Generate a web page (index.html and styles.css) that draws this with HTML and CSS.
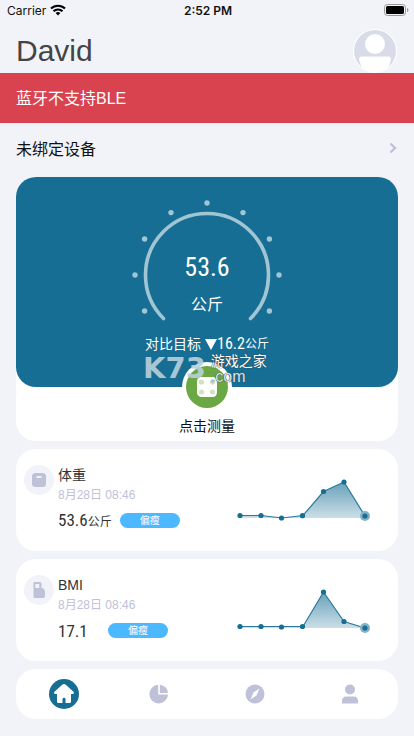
FILE: index.html
```html
<!DOCTYPE html>
<html lang="zh-CN">
<head>
<meta charset="utf-8">
<meta name="viewport" content="width=device-width, initial-scale=1">
<title>David</title>
<link rel="stylesheet" href="styles.css">
</head>
<body>
<div class="status">
  <div class="carrier">Carrier
    <svg width="16" height="12" viewBox="0 0 16 12" fill="none" stroke="#000" stroke-width="2.1"><path d="M1 4.6a10 10 0 0 1 14 0M3.5 7.3a6.4 6.4 0 0 1 9 0"/><path d="M8 11.5 5.6 9.1a3.4 3.4 0 0 1 4.8 0z" fill="#000" stroke="none"/></svg>
  </div>
  <div class="clock">2:52 PM</div>
  <svg class="battery" width="25" height="12" viewBox="0 0 25 12"><rect x=".5" y=".5" width="21" height="11" rx="3" fill="none" stroke="#999"/><rect x="2" y="2" width="18" height="8" rx="1.6"/><path d="M23 4v4q1.500-.6 1.500-2t-1.500-2" fill="#999"/></svg>
</div>
<header class="header">
  <h1>David</h1>
  <button class="avatar" aria-label="个人资料">
    <svg width="44" height="44" viewBox="0 0 44 44"><defs><clipPath id="face"><circle cx="22" cy="22" r="21.500"/></clipPath></defs><circle cx="22" cy="22" r="22" fill="#fff"/><circle cx="22" cy="22" r="21" fill="#d9dbe8"/><g fill="#fff" clip-path="url(#face)"><circle cx="22" cy="15" r="10"/><path d="M9 27.500h26q3 0 3 3l-1.500 5L33 44H11L7.500 35.500 6 30.500q0-3 3-3"/></g></svg>
  </button>
</header>
<div class="alert" role="alert">蓝牙不支持BLE</div>
<main>
  <a class="device" href="#device">未绑定设备
    <svg width="10" height="12" viewBox="0 0 10 12" fill="none" stroke="#bfc1d8" stroke-width="2.400"><path d="m2.500 1.500 4.500 4.500-4.500 4.500"/></svg>
  </a>
  <section class="measure">
    <div class="panel">
      <div class="gauge">
        <svg width="150" height="130" viewBox="0 0 150 130"><path d="M31.500 121.500a61.500 61.500 0 1 1 87 0" fill="none" stroke="#a2c5d4" stroke-width="3.600" stroke-linecap="round"/><g fill="#a2c5d4"><circle cx="75" cy="6" r="2.700"/><circle cx="39" cy="15.600" r="2.700"/><circle cx="111" cy="15.600" r="2.700"/><circle cx="12.600" cy="42" r="2.700"/><circle cx="137.400" cy="42" r="2.700"/><circle cx="3" cy="78" r="2.700"/><circle cx="147" cy="78" r="2.700"/><circle cx="12.600" cy="114" r="2.700"/><circle cx="137.400" cy="114" r="2.700"/></g></svg>
        <div class="reading"><strong class="num">53.6</strong><span>公斤</span></div>
      </div>
      <p class="goal">对比目标 <svg width="12" height="11" viewBox="0 0 12 11"><path d="M0 0h12L6 11z" fill="#fff"/></svg><strong class="num">16.2</strong><small>公斤</small></p>
    </div>
    <button class="start">
      <svg width="50" height="50" viewBox="0 0 50 50"><circle cx="25" cy="25" r="25" fill="#fff"/><circle cx="25" cy="25" r="21" fill="#6ba844"/><rect x="15" y="15" width="20" height="20" rx="4.500" fill="#fff"/><g fill="#cfe3c3"><circle cx="19.500" cy="20" r="2.600"/><circle cx="30.500" cy="20" r="2.600"/><circle cx="19.500" cy="30" r="2.600"/><circle cx="30.500" cy="30" r="2.600"/></g></svg>
      <span>点击测量</span>
    </button>
    <div class="watermark"><b>K73</b><div><span>游戏之家</span><i>.com</i></div></div>
  </section>
  <section class="card">
    <div class="badge"><svg width="14" height="14" viewBox="0 0 14 14"><rect width="14" height="14" rx="3.500" fill="#bfc1d8"/><path d="M4.500 4h5" stroke="#f1f2f7" stroke-width="2"/></svg></div>
    <div class="info">
      <h2>体重</h2>
      <time>8月28日 08:46</time>
      <div class="value"><p><strong class="num">53.6</strong><small>公斤</small></p><span class="tag">偏瘦</span></div>
    </div>
    <svg class="chart" width="136" height="50" viewBox="0 0 136 50">
      <defs><linearGradient id="fade" x1="0" y1="8" x2="0" y2="46" gradientUnits="userSpaceOnUse"><stop stop-color="#166e94" stop-opacity=".65"/><stop offset="1" stop-color="#166e94" stop-opacity=".2"/></linearGradient></defs>
      <path d="M5 41.500h21L47 44l21-2.500L88.500 17.500 109 8l21 34v2H5z" fill="url(#fade)"/>
      <path d="M5 41.500h21L47 44l21-2.500L88.500 17.500 109 8l21 34" fill="none" stroke="#29799c" stroke-width="1.200"/>
      <circle cx="130" cy="42" r="5" fill="#82b1c5"/>
      <g fill="#166e94"><circle cx="5" cy="41.500" r="2.600"/><circle cx="26" cy="41.500" r="2.600"/><circle cx="46.500" cy="44" r="2.600"/><circle cx="67.500" cy="41.700" r="2.600"/><circle cx="88.500" cy="17.500" r="2.600"/><circle cx="109" cy="8" r="2.600"/><circle cx="130" cy="42" r="2.600"/></g>
    </svg>
  </section>
  <section class="card">
    <div class="badge"><svg width="12" height="16" viewBox="0 0 12 16"><path fill-rule="evenodd" d="M1.500 0H7q1.500 0 1.500 1.500V6h1Q12 7 12 9.500V14q0 2-2 2H1.500Q.5 16 .5 15V1q0-1 1-1m.8 2v4h4V2z" fill="#bfc1d8"/></svg></div>
    <div class="info">
      <h2>BMI</h2>
      <time>8月28日 08:46</time>
      <div class="value"><p><strong class="num">17.1</strong></p><span class="tag">偏瘦</span></div>
    </div>
    <svg class="chart" width="136" height="50" viewBox="0 0 136 50">
      <path d="M5 42.500h63L88.500 8 109 37.500l21 6.500H5z" fill="url(#fade)"/>
      <path d="M5 42.500h63L88.500 8 109 37.500l21 6.500" fill="none" stroke="#29799c" stroke-width="1.200"/>
      <circle cx="130" cy="44" r="5" fill="#82b1c5"/>
      <g fill="#166e94"><circle cx="5" cy="42.500" r="2.600"/><circle cx="26" cy="42.500" r="2.600"/><circle cx="46.500" cy="43" r="2.600"/><circle cx="67.500" cy="42.500" r="2.600"/><circle cx="88.500" cy="8" r="2.600"/><circle cx="109" cy="37.500" r="2.600"/><circle cx="130" cy="44" r="2.600"/></g>
    </svg>
  </section>
  <nav class="tabs">
    <a href="#home" aria-label="首页"><svg width="30" height="30" viewBox="0 0 30 30"><circle cx="15" cy="15" r="15" fill="#166e94"/><path d="M13.500 5.500q1.500-1.200 3 0l8.300 7.500q.8 1.500-.8 2h-2v7.500q0 1.500-1.500 1.500h-4v-4q0-1.300-1.500-1.300T13.500 20v4h-4Q8 24 8 22.500V15H6q-1.600-.5-.8-2z" fill="#fff"/></svg></a>
    <a href="#stats" aria-label="统计"><svg width="20" height="20" viewBox="0 0 20 20" fill="#bfc1d8"><path d="M9.200.8v9.700H19A9.300 9.300 0 1 1 9.200.8"/><path d="M10.800.8A9 9 0 0 1 19 8.900h-8.200z"/></svg></a>
    <a href="#discover" aria-label="发现"><svg width="20" height="20" viewBox="0 0 20 20"><circle cx="10" cy="10" r="9.500" fill="#bfc1d8"/><path d="M14.500 4.500 11.500 11.500 5.500 15.500 8.500 8.500z" fill="#fff"/></svg></a>
    <a href="#me" aria-label="我的"><svg width="20" height="20" viewBox="0 0 20 20" fill="#bfc1d8"><circle cx="10" cy="5.500" r="5"/><path d="M2 19v-2q0-4.500 4.500-4.500h7Q18 12.500 18 17v2q0 .5-1 .5H3q-1 0-1-.5"/></svg></a>
  </nav>
</main>
</body>
</html>
```
FILE: styles.css
```css
* { box-sizing: border-box; }
body {
  margin: 0;
  background: #f2f3f8;
  color: #111;
  font-family: "Liberation Sans", "Noto Sans CJK SC", sans-serif;
  font-size: 16px;
}
h1, h2, p { margin: 0; font-weight: 400; }
svg { display: block; flex: none; }
button { border: 0; padding: 0; background: none; font: inherit; color: inherit; }
a { color: inherit; text-decoration: none; }
.num { font-family: "Liberation Sans Narrow", "Roboto Condensed", "Liberation Sans", sans-serif; font-weight: 400; }

.status {
  display: grid;
  grid-template-columns: 1fr auto 1fr;
  align-items: center;
  height: 22px;
  padding: 0 5px 2px 7px;
  font-family: Inter, sans-serif;
  font-size: 12px;
}
.carrier { display: flex; align-items: center; gap: 4px; }
.clock { font-weight: 600; }
.battery { justify-self: end; }

.header {
  display: flex;
  align-items: center;
  justify-content: space-between;
  height: 51px;
  padding: 7px 17px 0 16px;
}
.header h1 { color: #444; font-size: 30px; line-height: 44px; }

.alert {
  padding: 2px 16px 0;
  background: #d8434f;
  color: #fff;
  line-height: 48px;
}
main { padding: 0 16px 16px; }
.device { display: flex; align-items: center; justify-content: space-between; height: 54px; padding-bottom: 4px; }

.measure { position: relative; background: #fff; border-radius: 20px; }
.panel {
  display: flex;
  flex-direction: column;
  align-items: center;
  height: 210px;
  padding-top: 20px;
  border-radius: 20px;
  background: #166e94;
  color: #fff;
}
.gauge { display: grid; place-items: center; }
.gauge > * { grid-area: 1 / 1; }
.reading { display: flex; flex-direction: column; align-items: center; gap: 10px; padding-top: 44px; }
.reading .num { font-size: 26px; line-height: 32px; }
.reading span { line-height: 24px; }
.goal { display: flex; align-items: center; margin-top: 5px; font-size: 14px; line-height: 24px; }
.goal svg { margin-left: 4px; }
.goal .num { font-size: 16px; }
.goal small { font-size: 12px; }

.start {
  position: relative;
  display: flex;
  flex-direction: column;
  align-items: center;
  gap: 4px;
  margin: -25px auto 0;
  padding-bottom: 4px;
  font-size: 14px;
  line-height: 21px;
}
.watermark {
  position: absolute;
  top: 176px;
  left: calc(50% - 64px);
  display: flex;
  gap: 5px;
  color: #d9e3e8;
}
.watermark b { color: #b9d0db; font: 700 29px/31px "DejaVu Sans", sans-serif; opacity: .9; }
.watermark div { display: flex; flex-direction: column; font-size: 14px; line-height: 16px; }
.watermark span { color: #fff; text-shadow: 0 0 1px #444, 0 0 1px #444; }
.watermark i { font-style: normal; font-size: 16px; line-height: 16px; text-shadow: 0 0 1px #444, 0 0 1px #444; }

.card {
  display: flex;
  height: 102px;
  margin-top: 8px;
  padding: 16px 27px 0 8px;
  border-radius: 20px;
  background: #fff;
}
.badge {
  display: grid;
  place-items: center;
  width: 30px;
  height: 30px;
  border-radius: 50%;
  background: #f2f3f8;
}
.info { flex: 1; padding-left: 4px; color: #333; }
.info h2 { font-size: 14px; line-height: 21px; }
.info time { display: block; color: #bfc1d8; font-size: 12px; line-height: 18px; }
.value { display: flex; align-items: center; gap: 8px; height: 32px; }
.value p { display: flex; align-items: baseline; min-width: 42px; line-height: 32px; padding-top: 2px; }
.value .num { font-size: 17px; }
.value small { font-size: 12px; }
.tag {
  width: 60px;
  border-radius: 8px;
  background: #4cb8ff;
  color: #fff;
  font-size: 10px;
  line-height: 15px;
  text-align: center;
}
.chart { margin-top: 9px; }

.tabs {
  display: grid;
  grid-template-columns: repeat(4, 1fr);
  place-items: center;
  height: 50px;
  margin-top: 8px;
  border-radius: 20px;
  background: #fff;
}
```
